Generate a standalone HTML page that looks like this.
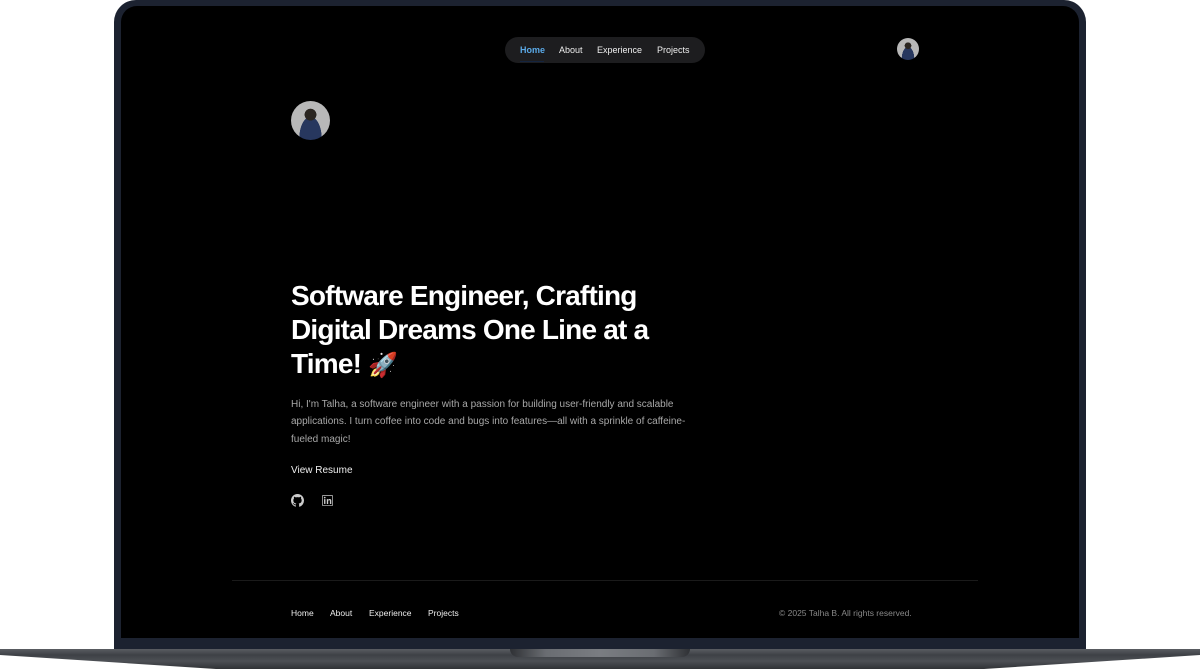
<!DOCTYPE html>
<html><head><meta charset="utf-8"><style>
*{margin:0;padding:0;box-sizing:border-box}
body{width:1200px;height:669px;background:#fff;position:relative;overflow:hidden;font-family:"Liberation Sans",sans-serif}
.bezel{position:absolute;left:114px;top:0;width:972px;height:652px;background:#1c2230;border-radius:22px 22px 0 0}
.screen{position:absolute;left:121px;top:6px;width:958px;height:632px;background:#000;border-radius:16px 16px 0 0}
.base{position:absolute;left:0;top:649px;width:1200px;height:20px;background:linear-gradient(#5a5d62 0,#3e4146 30%,#4d5055 60%,#303236 100%);clip-path:polygon(0 0,100% 0,100% 30%,82% 100%,18% 100%,0 30%)}
.notch{position:absolute;left:510px;top:649px;width:180px;height:8px;background:linear-gradient(90deg,#2f3135,#6a6d72 20%,#7a7d82 50%,#6a6d72 80%,#2f3135);border-radius:0 0 8px 8px}
.nav{position:absolute;left:505px;top:37px;width:200px;height:26px;background:#1d1d1f;border-radius:13px;font-size:9px;color:#eee}
.nav span{position:absolute;top:8px}
.av{position:absolute;border-radius:50%;background:radial-gradient(circle at 50% 35%,#2a2520 0 18%,transparent 19%),radial-gradient(ellipse at 50% 95%,#27375e 0 40%,transparent 41%),#b8b8b8}
h1{position:absolute;left:291px;top:279px;width:420px;font-size:28px;line-height:34px;color:#fff;font-weight:700;letter-spacing:-0.8px}
h1 .r{font-size:24px}
p{position:absolute;left:291px;top:396px;width:410px;font-size:10px;line-height:17.3px;color:#a8a8a8}
.vr{position:absolute;left:291px;top:465px;font-size:10px;color:#eee}
.hr{position:absolute;left:232px;top:580px;width:746px;height:1px;background:#1a1a1a}
.fl{position:absolute;top:608px;font-size:8.5px;color:#eee}
.cp{position:absolute;left:779px;top:608px;font-size:8.5px;color:#888}
</style></head><body>
<div class="bezel"></div>
<div class="screen"></div>
<div class="base"></div>
<div class="notch"></div>
<div class="nav"><span style="left:15px;color:#5aa9e6;font-weight:bold">Home</span><span style="left:54px">About</span><span style="left:92px">Experience</span><span style="left:152px">Projects</span></div>
<div style="position:absolute;left:520px;top:61px;width:24px;height:1px;background:#14243f"></div>
<div class="av" style="left:897px;top:38px;width:22px;height:22px"></div>
<div class="av" style="left:291px;top:101px;width:39px;height:39px"></div>
<h1>Software Engineer, Crafting Digital Dreams One Line at a Time! <span class="r">🚀</span></h1>
<p>Hi, I'm Talha, a software engineer with a passion for building user-friendly and scalable applications. I turn coffee into code and bugs into features—all with a sprinkle of caffeine-fueled magic!</p>
<div class="vr">View Resume</div>
<svg style="position:absolute;left:291px;top:494px" width="13" height="13" viewBox="0 0 16 16"><path fill="#ccc" d="M8 0C3.58 0 0 3.58 0 8c0 3.54 2.29 6.530 5.47 7.59.4.07.55-.17.55-.38v-1.33c-2.23.48-2.7-1.070-2.7-1.07-.36-.92-.89-1.17-.89-1.17-.73-.5.06-.49.06-.49.8.06 1.23.83 1.23.83.71 1.22 1.87.87 2.33.66.07-.52.28-.87.5-1.07-1.78-.2-3.64-.89-3.64-3.95 0-.87.31-1.59.82-2.15-.08-.2-.36-1.02.08-2.12 0 0 .67-.21 2.2.82a7.6 7.6 0 014 0c1.53-1.04 2.2-.82 2.2-.82.44 1.1.16 1.92.08 2.12.51.56.82 1.27.82 2.15 0 3.07-1.87 3.75-3.65 3.95.29.25.54.73.54 1.48v2.2c0 .21.15.46.55.38A8 8 0 0016 8c0-4.42-3.58-8-8-8z"/></svg>
<svg style="position:absolute;left:322px;top:495px" width="11" height="11" viewBox="0 0 16 16"><rect x="0.5" y="0.5" width="15" height="15" rx="1.5" fill="none" stroke="#ccc"/><rect x="3" y="6" width="2" height="7" fill="#ccc"/><circle cx="4" cy="3.8" r="1.2" fill="#ccc"/><path fill="#ccc" d="M7 6h2v1c.5-.8 1.3-1.2 2.3-1.2 1.6 0 2.2 1 2.2 2.8V13h-2V9c0-.9-.3-1.5-1.1-1.5S9 8.1 9 9v4H7z"/></svg>
<div class="hr"></div>
<div class="fl" style="left:291px">Home</div>
<div class="fl" style="left:330px">About</div>
<div class="fl" style="left:369px">Experience</div>
<div class="fl" style="left:428px">Projects</div>
<div class="cp">© 2025 Talha B. All rights reserved.</div>
</body></html>
